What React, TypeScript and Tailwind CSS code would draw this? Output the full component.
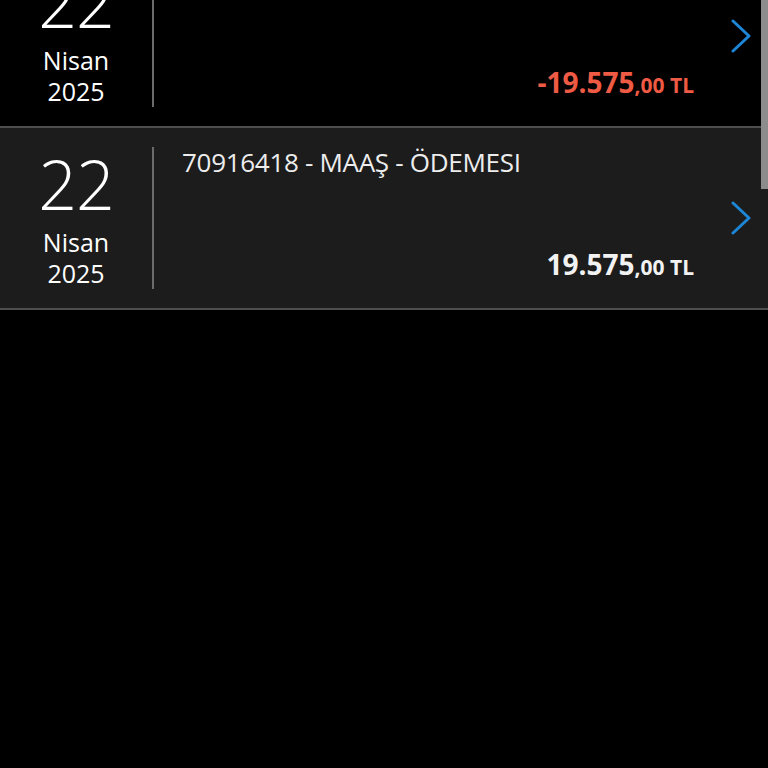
import React from 'react';

type Tx = { day: string; month: string; year: string; title: string; amount: string; cents: string; negative: boolean };

const TXS: Tx[] = [
  { day: '22', month: 'Nisan', year: '2025', title: '70916418 - MAAŞ - ÖDEMESI', amount: '-19.575', cents: ',00', negative: true },
  { day: '22', month: 'Nisan', year: '2025', title: '70916418 - MAAŞ - ÖDEMESI', amount: '19.575', cents: ',00', negative: false },
];

const Chevron = () => (
  <svg width="22" height="34" viewBox="0 0 22 34" fill="none">
    <polyline points="2,2 18,17 2,32" stroke="#1d86d6" strokeWidth="3" strokeLinecap="round" strokeLinejoin="round" />
  </svg>
);

const App: React.FC = () => {
  return (
    <div className="w-[768px] h-[768px] bg-black overflow-hidden relative" style={{ fontFamily: '"Open Sans", "Noto Sans", sans-serif' }}>
      {/* list is scrolled: first row partly above the viewport */}
      <div className="-mt-[54px]">
        {TXS.map((tx, idx) => (
          <div
            key={idx}
            className={`flex h-[182px] border-b-2 border-[#4e4e4e] ${tx.negative ? 'bg-black' : 'bg-[#1c1c1c]'}`}
          >
            {/* date */}
            <div className="w-[152px] flex flex-col items-center pt-[20px] text-white">
              <span className="text-[68px] leading-[72px] font-light tracking-[-1px]">{tx.day}</span>
              <span className="text-[25px] leading-[30px] mt-[7px]">{tx.month}</span>
              <span className="text-[25px] leading-[30px] mt-[1px]">{tx.year}</span>
            </div>
            <div className="w-[2px] bg-[#6b6b6b] my-[19px]" />
            {/* body */}
            <div className="flex-1 flex flex-col pl-[28px] pt-[17px]">
              <span className="text-[26px] leading-[34px] text-[#ededed] tracking-[-0.3px] whitespace-nowrap">{tx.title}</span>
              <div className="flex-1" />
              <div className={`self-end pb-[26px] font-bold ${tx.negative ? 'text-[#ee5a43]' : 'text-[#f2f2f2]'}`}>
                <span className="text-[28px] leading-[30px]">{tx.amount}</span>
                <span className="text-[21px] leading-[30px]">{tx.cents} TL</span>
              </div>
            </div>
            {/* chevron */}
            <div className="w-[74px] pl-[37px] flex items-center">
              <Chevron />
            </div>
          </div>
        ))}
      </div>
      {/* scrollbar */}
      <div className="absolute right-0 top-0 w-[7px] h-[189px] bg-[#8c8c8c]" />
    </div>
  );
};

export default App;
